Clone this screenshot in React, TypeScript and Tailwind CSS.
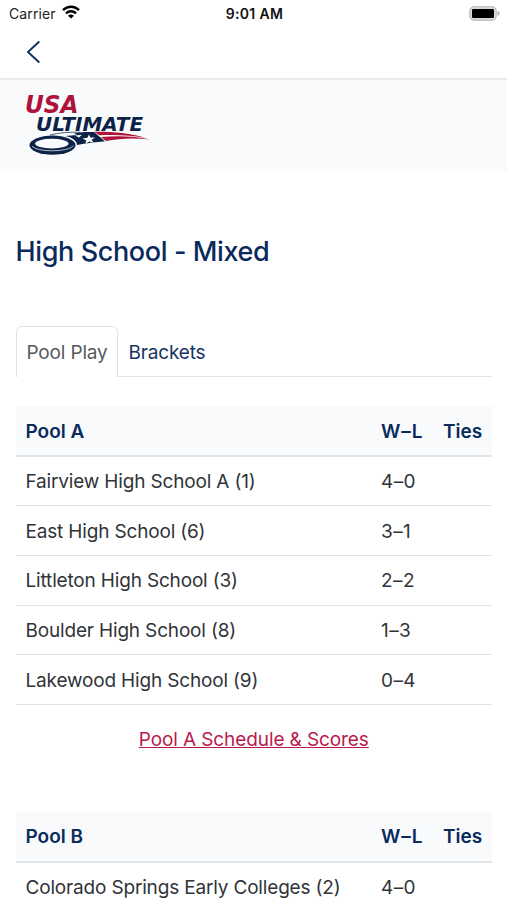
import { ReactNode } from "react";

type Team = { name: string; record: string };
type Pool = { name: string; teams: Team[] };

const pools: Pool[] = [
  {
    name: "Pool A",
    teams: [
      { name: "Fairview High School A (1)", record: "4–0" },
      { name: "East High School (6)", record: "3–1" },
      { name: "Littleton High School (3)", record: "2–2" },
      { name: "Boulder High School (8)", record: "1–3" },
      { name: "Lakewood High School (9)", record: "0–4" },
    ],
  },
  {
    name: "Pool B",
    teams: [{ name: "Colorado Springs Early Colleges (2)", record: "4–0" }],
  },
];

function StatusBar() {
  return (
    <div className="grid h-[27px] grid-cols-3 items-center pl-[9px] pr-[7px] text-[13.5px] text-[#222]">
      <div className="flex items-center gap-[6px]">
        <span className="text-[14px] tracking-[0.1px]">Carrier</span>
        <svg className="-mt-[3px]" width="18" height="14" viewBox="0 0 18 14" fill="none" stroke="#000" strokeWidth="2.4">
          <path d="M1 5.2C5.5 0.6 12.5 0.6 17 5.2" />
          <path d="M4 8.4C6.8 5.6 11.2 5.6 14 8.4" />
          <path d="M9 13.6L6 10.7C7.7 9.2 10.3 9.2 12 10.7Z" fill="#000" stroke="none" />
        </svg>
      </div>
      <span className="text-center text-[14px] font-semibold tracking-[0.35px] text-[#111]">9:01 AM</span>
      <svg className="-mt-[1px] justify-self-end" width="31" height="15" viewBox="0 0 31 15">
        <rect x="0.7" y="0.7" width="26.6" height="13.6" rx="4.2" fill="#d8d8d8" stroke="#b8b8b8" strokeWidth="1" />
        <rect x="3" y="3" width="22" height="9" rx="1.2" fill="#000" />
        <path d="M28.6 5v5c1.2-.4 2-1.4 2-2.5s-.8-2.1-2-2.5Z" fill="#aaa" />
      </svg>
    </div>
  );
}

function NavBar() {
  return (
    <nav className="flex h-[53px] items-center border-b-2 border-[#e9eaeb] pb-[2px] pl-[26px]">
      <button aria-label="Back">
        <svg width="15" height="24" viewBox="0 0 15 24" fill="none" stroke="#0c2d61" strokeWidth="1.9">
          <path d="M13.3 1.5L2 12l11.3 10.5" />
        </svg>
      </button>
    </nav>
  );
}

function Logo() {
  return (
    <svg
      className="overflow-visible"
      width="128"
      height="64"
      viewBox="0 0 128 64"
      role="img"
      aria-label="USA Ultimate"
    >
      <g fontFamily='"DejaVu Sans", sans-serif' fontWeight="bold" fontStyle="italic">
        <text x="1" y="19" fontSize="24" textLength="53.5" lengthAdjust="spacingAndGlyphs" fill="#b01339">
          USA
        </text>
        <text x="12" y="36.5" fontSize="19.5" textLength="107" lengthAdjust="spacingAndGlyphs" fill="#0c2348">
          ULTIMATE
        </text>
      </g>
      {/* flag trail */}
      <path d="M26 41C36 38.5 46 38 56 38.3" fill="none" stroke="#0c2348" strokeWidth="0.7" />
      <path d="M41 42L53 41L50 39.5C57 38 63 37.7 70 38L81 47.3C72 48 62 49.3 53 51C53 47 48 43 41 42Z" fill="#0c2348" />
      <path d="M51 41.5L58 40.7L55 43.5Z" fill="#f8fafc" />
      <path d="M65 40.5L66.4 43.6L71 43.4L67.6 46L70 49L65.4 47.4L61.4 49.8L62.2 46.5L58.5 44.5L63.4 43.8Z" fill="#f8fafc" />
      <path d="M70 37.7C88 37.5 107 39 121 43.8C105 40.8 89 40.6 75.5 41.3Z" fill="#b01339" />
      <path d="M77 43C94 41.5 111 42 126 45.6C110 43.6 95 44.5 82 47Z" fill="#b01339" />
      {/* disc */}
      <ellipse cx="28.5" cy="51.2" rx="23" ry="9.6" fill="#0c2348" />
      <ellipse cx="27.8" cy="49.6" rx="16.7" ry="4.9" fill="#f8fafc" />
      <path d="M8 52C12 58.3 45 58.5 49.5 51.5" fill="none" stroke="#c3ccd6" strokeWidth="0.9" />
    </svg>
  );
}

function Tab({ active, children }: { active?: boolean; children: ReactNode }) {
  return (
    <a
      href="#"
      className={
        active
          ? "-mb-px rounded-t-[6px] border border-b-0 border-[#dfe3e7] bg-white pl-[10px] pr-[9.5px] pt-[11px] text-[#565a5e]"
          : "px-[10.5px] pt-[12px] text-[#143463]"
      }
    >
      {children}
    </a>
  );
}

function PoolTable({ pool }: { pool: Pool }) {
  return (
    <table className="w-full table-fixed border-collapse text-left">
      <colgroup>
        <col />
        <col className="w-[62px]" />
        <col className="w-[49px]" />
      </colgroup>
      <thead>
        <tr className="h-[50px] border-b-2 border-[#e2e5e8] bg-[#f8fafc] text-[#0a2a5c]">
          <th className="pl-[10px] pt-[2px] font-semibold tracking-normal">{pool.name}</th>
          <th className="pt-[2px] font-semibold tracking-[0.9px]">W–L</th>
          <th className="pt-[2px] font-semibold tracking-normal">Ties</th>
        </tr>
      </thead>
      <tbody className="text-[#303438]">
        {pool.teams.map((team) => (
          <tr key={team.name} className="h-[49.7px] border-b border-[#dee2e6]">
            <td className="whitespace-nowrap pl-[10px] pt-[2px]">{team.name}</td>
            <td className="pt-[2px] tracking-[0.4px]">{team.record}</td>
            <td />
          </tr>
        ))}
      </tbody>
    </table>
  );
}

export default function App() {
  return (
    <div className="h-[900px] overflow-hidden bg-white font-['Inter',sans-serif]">
      <StatusBar />
      <NavBar />
      <header className="h-[91px] bg-[#f8fafc] pl-6 pt-[14px]">
        <Logo />
      </header>

      <main className="pl-[15.5px] pr-[15px] text-[19px] leading-[30px] tracking-[-0.17px]">
        <h1 className="mt-[64px] text-[27px] font-medium leading-[34px] tracking-[-0.38px] text-[#0a2a5c]">
          High School - Mixed
        </h1>

        <div className="mt-[57px] flex h-[51px] border-b border-[#dfe3e7]">
          <Tab active>Pool Play</Tab>
          <Tab>Brackets</Tab>
        </div>

        <section className="pt-[29px]">
          <PoolTable pool={pools[0]} />
          <p className="mt-[20px] text-center tracking-[-0.1px]">
            <a href="#" className="text-[#b81c4b] underline">
              Pool A Schedule &amp; Scores
            </a>
          </p>
        </section>

        <section className="pt-[57px]">
          <PoolTable pool={pools[1]} />
        </section>
      </main>
    </div>
  );
}
